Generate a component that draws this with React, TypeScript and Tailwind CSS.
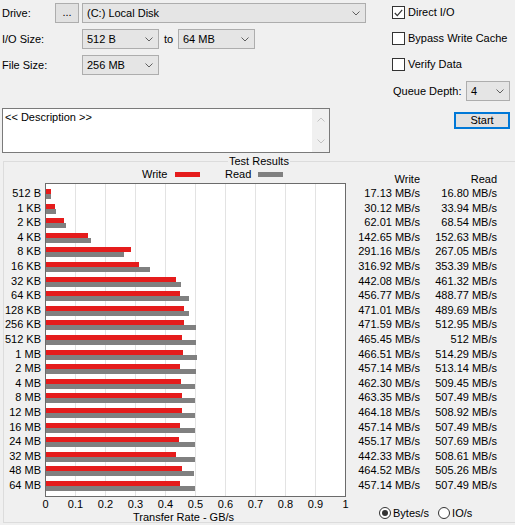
import React from "react";

type Row = { size: string; w: string; r: string };

const ROWS: Row[] = [
  { size: "512 B", w: "17.13", r: "16.80" },
  { size: "1 KB", w: "30.12", r: "33.94" },
  { size: "2 KB", w: "62.01", r: "68.54" },
  { size: "4 KB", w: "142.65", r: "152.63" },
  { size: "8 KB", w: "291.16", r: "267.05" },
  { size: "16 KB", w: "316.92", r: "353.39" },
  { size: "32 KB", w: "442.08", r: "461.32" },
  { size: "64 KB", w: "456.77", r: "488.77" },
  { size: "128 KB", w: "471.01", r: "489.69" },
  { size: "256 KB", w: "471.59", r: "512.95" },
  { size: "512 KB", w: "465.45", r: "512" },
  { size: "1 MB", w: "466.51", r: "514.29" },
  { size: "2 MB", w: "457.14", r: "513.14" },
  { size: "4 MB", w: "462.30", r: "509.45" },
  { size: "8 MB", w: "463.35", r: "507.49" },
  { size: "12 MB", w: "464.18", r: "508.92" },
  { size: "16 MB", w: "457.14", r: "507.49" },
  { size: "24 MB", w: "455.17", r: "507.69" },
  { size: "32 MB", w: "442.33", r: "508.61" },
  { size: "48 MB", w: "464.52", r: "505.26" },
  { size: "64 MB", w: "457.14", r: "507.49" },
];

const TICKS = ["0", "0.1", "0.2", "0.3", "0.4", "0.5", "0.6", "0.7", "0.8", "0.9", "1"];

// 1 GB/s spans 300px of chart
const barWidth = (mb: string) => (parseFloat(mb) / 1024) * 300;

function Chevron({ color = "#5f5f5f", up = false }: { color?: string; up?: boolean }) {
  return (
    <svg width="8" height="5" viewBox="0 0 8 5" className="shrink-0">
      <path
        d={up ? "M0.5 4.5 L4 1 L7.5 4.5" : "M0.5 0.5 L4 4 L7.5 0.5"}
        stroke={color}
        strokeWidth="1"
        fill="none"
      />
    </svg>
  );
}

function Combo({ value, className }: { value: string; className: string }) {
  return (
    <div
      className={`flex h-[20px] shrink-0 items-center justify-between border border-[#adadad] bg-[#e5e5e5] pl-[4px] pr-[5px] ${className}`}
    >
      <span>{value}</span>
      <Chevron />
    </div>
  );
}

function Check({ label, checked }: { label: string; checked?: boolean }) {
  return (
    <div className="flex h-[13px] items-center gap-[3px] pl-[1px]">
      <div className="flex h-[13px] w-[13px] items-center justify-center border border-[#333333] bg-white">
        {checked && (
          <svg width="9" height="8" viewBox="0 0 9 8">
            <path d="M0.8 4 L3.3 6.6 L8.2 0.8" stroke="#333333" strokeWidth="1.2" fill="none" />
          </svg>
        )}
      </div>
      <span>{label}</span>
    </div>
  );
}

function Radio({ label, checked }: { label: string; checked?: boolean }) {
  return (
    <div className="flex h-[12px] items-center gap-[2px]">
      <div className="flex h-[12px] w-[12px] items-center justify-center rounded-full border border-[#333333] bg-white">
        {checked && <div className="h-[6px] w-[6px] rounded-full bg-[#333333]" />}
      </div>
      <span>{label}</span>
    </div>
  );
}

export default function App() {
  return (
    <div className="h-[525px] w-[515px] overflow-hidden bg-[#f0f0f0] font-['Liberation_Sans',Arial,sans-serif] text-[11px] leading-[13px] text-black">
      {/* settings */}
      <div className="flex h-[108px]">
        <div className="flex w-[391px] flex-col gap-[6px] pl-[2px] pt-[3px]">
          <div className="flex h-[20px] items-center">
            <span className="w-[53px]">Drive:</span>
            <div className="flex h-[20px] w-[24px] items-end justify-center border border-[#adadad] bg-[#e1e1e1] pb-[3px]">
              ...
            </div>
            <Combo value="(C:) Local Disk" className="ml-[3px] w-[284px]" />
          </div>
          <div className="flex h-[20px] items-center">
            <span className="w-[80px]">I/O Size:</span>
            <Combo value="512 B" className="w-[77px]" />
            <span className="w-[19px] pl-[5px]">to</span>
            <Combo value="64 MB" className="w-[77px]" />
          </div>
          <div className="flex h-[20px] items-center">
            <span className="w-[80px]">File Size:</span>
            <Combo value="256 MB" className="w-[77px]" />
          </div>
        </div>
        <div className="flex flex-1 flex-col gap-[13px] pt-[6px]">
          <Check label="Direct I/O" checked />
          <Check label="Bypass Write Cache" />
          <Check label="Verify Data" />
          <div className="-mt-[3px] flex h-[20px] items-center">
            <span className="w-[75px] pl-[2px]">Queue Depth:</span>
            <Combo value="4" className="w-[44px]" />
          </div>
        </div>
      </div>

      {/* description + start */}
      <div className="flex h-[53px] items-start">
        <div className="ml-[2px] flex h-[45px] w-[328px] border border-[#7a7a7a] bg-white">
          <div className="flex-1 pl-[2px] pt-[2px]">&lt;&lt; Description &gt;&gt;</div>
          <div className="flex w-[17px] flex-col items-center justify-between bg-[#f0f0f0] py-[8px]">
            <Chevron color="#c2c2c2" up />
            <Chevron color="#c2c2c2" />
          </div>
        </div>
        <button
          type="button"
          className="ml-[124px] mt-[4px] flex h-[17px] w-[56px] items-center justify-center border-2 border-[#0078d7] bg-[#e1e1e1] text-[11px] leading-[13px]"
        >
          Start
        </button>
      </div>

      {/* results group */}
      <div className="relative ml-[3px] h-[362px] w-[520px] border border-[#dcdcdc]">
        <span className="absolute -top-[7px] left-[224px] bg-[#f0f0f0] px-[1px]">Test Results</span>

        <div className="flex">
          {/* size labels */}
          <div className="w-[41px] pt-[24px] pr-[4px] text-right">
            {ROWS.map((row) => (
              <div key={row.size} className="h-[14.6px] leading-[14.6px]">
                {row.size}
              </div>
            ))}
          </div>

          {/* chart */}
          <div className="w-[301px]">
            <div className="flex h-[21px] pl-[97px] pt-[6px]">
              <div className="flex h-[13px] items-center">
                <span className="w-[33px]">Write</span>
                <div className="h-[5px] w-[25px] bg-[#e51c1c]" />
                <span className="ml-[25px] w-[33px]">Read</span>
                <div className="h-[5px] w-[25px] bg-[#808080]" />
              </div>
            </div>
            <div className="relative h-[314px] border border-[#6b6b6b] bg-white pt-[2px]">
              <div className="absolute inset-0 flex">
                {TICKS.slice(1, 10).map((t) => (
                  <div key={t} className="h-full w-[30px] shrink-0 border-r border-[#e3e3e3]" />
                ))}
              </div>
              <div className="relative">
                {ROWS.map((row) => (
                  <div key={row.size} className="h-[14.6px] pt-[3px]">
                    <div className="h-[5px] bg-[#e51c1c]" style={{ width: barWidth(row.w) }} />
                    <div className="h-[5px] bg-[#808080]" style={{ width: barWidth(row.r) }} />
                  </div>
                ))}
              </div>
            </div>
          </div>

          {/* values */}
          <div className="pt-[11px]">
            <div className="flex h-[13px]">
              <span className="w-[74px] text-right">Write</span>
              <span className="w-[77px] text-right">Read</span>
            </div>
            {ROWS.map((row) => (
              <div key={row.size} className="flex h-[14.6px] leading-[14.6px]">
                <span className="w-[74px] text-right">{row.w} MB/s</span>
                <span className="w-[77px] text-right">{row.r} MB/s</span>
              </div>
            ))}
          </div>
        </div>

        {/* axis + units */}
        <div className="flex">
          <div className="w-[356px]">
            <div className="ml-[26.5px] flex h-[14px] leading-[14px]">
              {TICKS.map((t) => (
                <span key={t} className="w-[30px] shrink-0 text-center">
                  {t}
                </span>
              ))}
            </div>
            <div className="pl-[129px]">Transfer Rate - GB/s</div>
          </div>
          <div className="flex gap-[9px] pl-[19px] pt-[10px]">
            <Radio label="Bytes/s" checked />
            <Radio label="IO/s" />
          </div>
        </div>
      </div>
    </div>
  );
}
